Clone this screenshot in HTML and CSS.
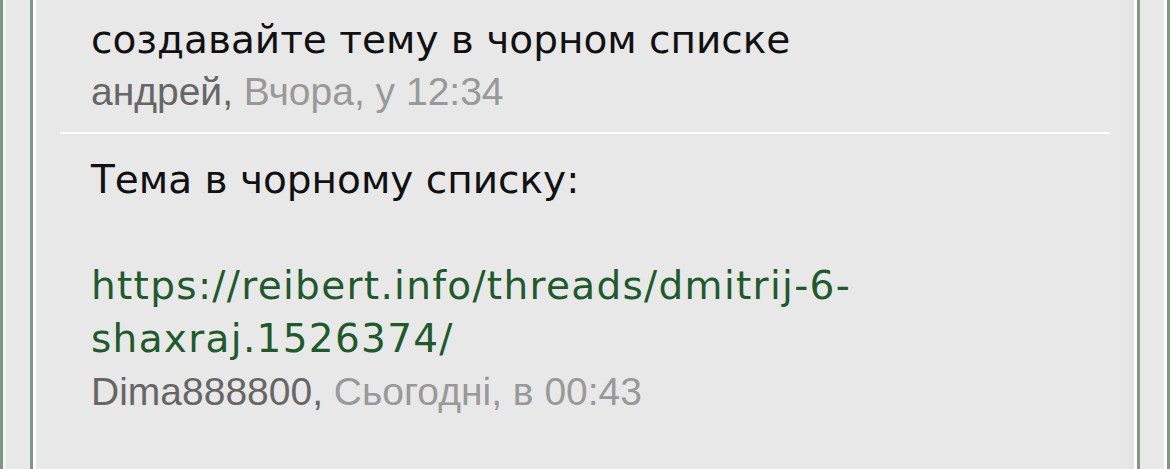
FILE: index.html
```html
<!DOCTYPE html>
<html lang="uk">

<head>
    <meta charset="UTF-8" />
    <meta name="viewport" content="width=device-width, initial-scale=1.0" />
    <title>Чорний список</title>

    <!-- Estilos -->
    <link rel="stylesheet" href="styles.css">
</head>

<body>

    <!-- Рамка сторінки -->
    <div class="frame">
        <!-- Блок з повідомленнями -->
        <div class="block">
            <ul class="list">
                <!-- Тема -->
                <li class="item item-topic">
                    <div class="topic-title">создавайте тему в чорном списке</div>
                    <div class="meta"><span class="author">андрей,</span> <span class="date">Вчора, у 12:34</span></div>
                </li>
                <!-- Повідомлення -->
                <li class="item item-post">
                    <div class="post-text">
                        Тема в чорному списку:<br><br>
                        <a href="#" class="link">https://reibert.info/threads/dmitrij-6-<br>shaxraj.1526374/</a>
                    </div>
                    <div class="meta"><span class="author">Dima888800,</span> <span class="date">Сьогодні, в 00:43</span></div>
                </li>
            </ul>
        </div>
    </div>

</body>

</html>
```

FILE: styles.css
```css
/* Página */
body {
    margin: 0;
    background-color: #e8e8e8;
    font-family: "DejaVu Sans", Verdana, sans-serif;
}

/* Marco exterior con doble borde (verde + blanco) */
.frame {
    border-left: 3px solid #7a9a82;
    border-right: 3px solid #7a9a82;
    box-shadow: inset 3px 0 0 #f4f4f4, inset -3px 0 0 #fff;
    padding: 0 27px;
    min-height: 469px;
    box-sizing: border-box;
}

/* Bloque interior */
.block {
    border-left: 3px solid #7a9a82;
    border-right: 3px solid #7a9a82;
    box-shadow: inset 3px 0 0 #fff, inset -3px 0 0 #fff, inset -14px 0 10px -8px rgba(0, 0, 0, 0.04);
    padding: 0 27px;
    min-height: 469px;
    box-sizing: border-box;
}

.list {
    list-style: none;
    margin: 0;
    padding: 0;
}

.item {
    padding-left: 31px;
}

/* Línea blanca entre elementos */
.item + .item {
    border-top: 2px solid #fff;
}

.item-topic {
    padding-top: 17px;
    padding-bottom: 17px;
}

.item-post {
    padding-top: 19px;
}

.topic-title {
    font-size: 39px;
    line-height: 46px;
    color: #111;
}

.post-text {
    font-size: 39px;
    line-height: 53px;
    color: #111;
}

.link {
    color: #1f5a2c;
    text-decoration: none;
    letter-spacing: 1.3px;
}

/* Autor y fecha */
.meta {
    font-family: "Liberation Sans", Arial, sans-serif;
    font-size: 39px;
    line-height: 46px;
}

.item-topic .meta {
    margin-top: 6px;
}

.item-post .meta {
    margin-top: 4px;
}

.author {
    color: #666;
}

.date {
    color: #999;
}
```
